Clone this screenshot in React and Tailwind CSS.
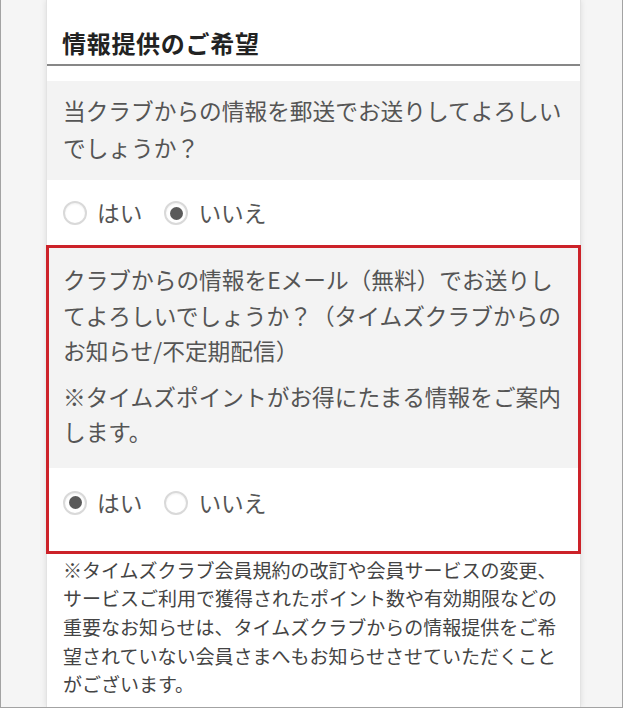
import React from "react";

const font = { fontFamily: '"Noto Sans CJK JP", "Noto Sans", sans-serif' };

function Radio({ checked, label }) {
  return (
    <label className="flex items-center gap-[10px]">
      <span className="flex h-[24px] w-[24px] items-center justify-center rounded-full border-2 border-[#d9d9d9] bg-white shadow-[inset_0_1px_2px_rgba(0,0,0,0.06)]">
        {checked && <span className="h-[13px] w-[13px] rounded-full bg-[#5a5a5a]" />}
      </span>
      <span className="text-[22.7px] leading-[32px] text-[#555]">{label}</span>
    </label>
  );
}

function RadioRow({ value }) {
  return (
    <div className="flex items-center gap-[22px]">
      <Radio checked={value === "yes"} label="はい" />
      <Radio checked={value === "no"} label="いいえ" />
    </div>
  );
}

export default function App() {
  return (
    <div className="flex h-[708px] overflow-hidden border-x border-b border-[#a3a3a3] bg-[#f5f5f5] pl-[45px]" style={font}>
      <div className="w-[535px] border-x border-[#e3e3e3] bg-white shadow-[0_0_6px_rgba(0,0,0,0.10)]">
        <div className="border-b-2 border-[#878787] px-[15px] pb-[5px] pt-[27px]">
          <h2 className="text-[24px] font-bold leading-[32px] tracking-[0.7px] text-[#222]">情報提供のご希望</h2>
        </div>

        <div className="mt-[15px] bg-[#f3f3f3] pb-[14px] pl-[16px] pr-[4px] pt-[11px] text-[22.7px] leading-[37px] text-[#555] whitespace-nowrap">
          当クラブからの情報を郵送でお送りしてよろしい
          <br />
          でしょうか？
        </div>
        <div className="pb-[16px] pl-[16px] pt-[17px]">
          <RadioRow value="no" />
        </div>

        <div className="-mx-[1px] border-[3px] border-[#cc2229]">
          <div className="bg-[#f3f3f3] pb-[18px] pl-[14px] pr-[2px] pt-[14px] text-[22.7px] leading-[35.5px] text-[#555] whitespace-nowrap">
            <p>
              クラブからの情報をEメール（無料）でお送りし
              <br />
              てよろしいでしょうか？（タイムズクラブからの
              <br />
              お知らせ/不定期配信）
            </p>
            <p className="mt-[10px]">
              ※タイムズポイントがお得にたまる情報をご案内
              <br />
              します。
            </p>
          </div>
          <div className="pb-[32px] pl-[14px] pt-[19px]">
            <RadioRow value="yes" />
          </div>
        </div>

        <p className="pl-[16px] pr-[4px] pt-[2px] text-[19px] leading-[28.7px] text-[#444] whitespace-nowrap">
          ※タイムズクラブ会員規約の改訂や会員サービスの変更、
          <br />
          サービスご利用で獲得されたポイント数や有効期限などの
          <br />
          重要なお知らせは、タイムズクラブからの情報提供をご希
          <br />
          望されていない会員さまへもお知らせさせていただくこと
          <br />
          がございます。
        </p>
      </div>
    </div>
  );
}
